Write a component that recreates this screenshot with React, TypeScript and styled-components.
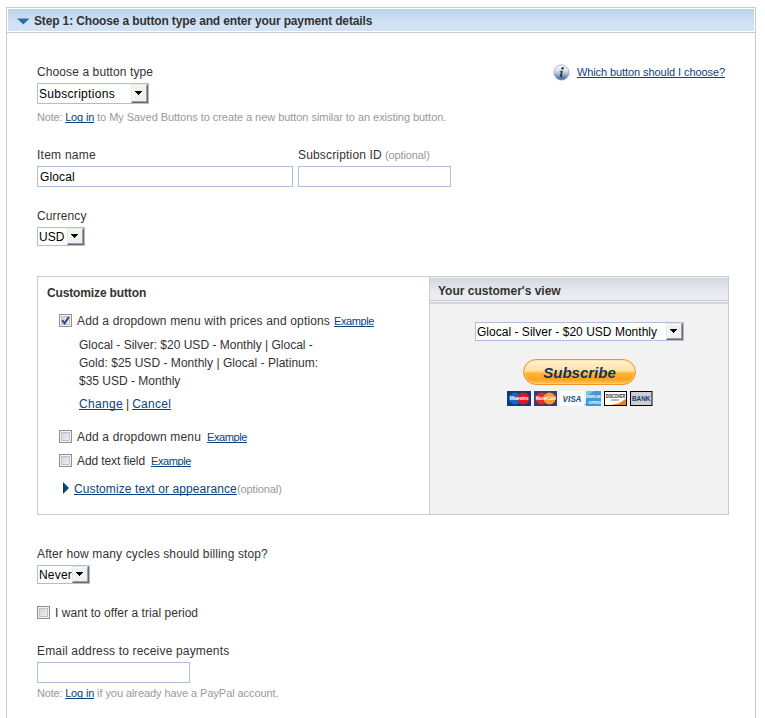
import React from "react";
import styled, { createGlobalStyle, css } from "styled-components";

const Global = createGlobalStyle`
  * { box-sizing: border-box; }
  html, body { margin: 0; padding: 0; background: #fff; }
  body { font: 12px/16px "Liberation Sans", Arial, sans-serif; color: #333; overflow: hidden; }
`;

const Page = styled.div`
  height: 718px;
  padding: 7px 9px 0 6px;
  overflow: hidden;
`;

const StepPanel = styled.section`
  width: 750px;
  height: 730px;
  border: 1px solid #ccc;
`;

const StepHeader = styled.header`
  height: 25px;
  padding: 1px;
  border-bottom: 1px solid #ccc;
`;

const StepBar = styled.div`
  display: flex;
  align-items: center;
  gap: 4px;
  height: 22px;
  padding: 2px 0 0 9px;
  background: linear-gradient(#b9d1ed, #cfe1f4 55%, #d1e3f5);
`;

const Text = styled.span<{ $ls?: number }>`
  white-space: pre;
  letter-spacing: ${(p) => p.$ls ?? 0}px;
`;

const Title = styled(Text)`
  font-weight: bold;
`;

const Small = styled(Text)`
  font-size: 11px;
  color: #999;
`;

const Link = styled.a<{ $ls?: number; $small?: boolean }>`
  color: #084482;
  white-space: pre;
  font-size: ${(p) => (p.$small ? 11 : 12)}px;
  letter-spacing: ${(p) => p.$ls ?? 0}px;
  text-decoration: underline;
  text-decoration-skip-ink: none;
  text-underline-offset: 1px;
  text-decoration-thickness: 1px;
`;

const Form = styled.div`
  display: flex;
  flex-direction: column;
  padding: 31px 26px 0 30px;
`;

const Line = styled.div<{ $top?: number; $gap?: number }>`
  display: flex;
  align-items: center;
  height: 16px;
  margin-top: ${(p) => p.$top ?? 0}px;
  gap: ${(p) => p.$gap ?? 0}px;
`;

const SplitLine = styled(Line)`
  justify-content: space-between;
  padding-right: 4px;
`;

const HelpLink = styled.div`
  display: flex;
  align-items: center;
  gap: 7px;
`;

const field = css`
  border: 1px solid #a9c1db;
  background: #fff;
  color: #000;
`;

const Input = styled.div<{ $w: number }>`
  ${field}
  display: flex;
  align-items: center;
  width: ${(p) => p.$w}px;
  height: 21px;
  padding-left: 2px;
`;

const SelectBox = styled.div<{ $w: number; $h?: number }>`
  ${field}
  display: flex;
  align-items: center;
  justify-content: space-between;
  width: ${(p) => p.$w}px;
  height: ${(p) => p.$h ?? 19}px;
  padding-left: 1px;
`;

const SelectArrow = styled.span`
  display: flex;
  align-items: center;
  justify-content: center;
  width: 17px;
  height: 100%;
  flex: none;
  padding: 0 2px 1px 0;
  background: #f0f0f0;
  border: 1px solid;
  border-color: #e3e3e3 #696969 #696969 #e3e3e3;
  box-shadow: inset -1px -1px #a0a0a0, inset 1px 1px #fff;
`;

const Fields = styled.div`
  display: flex;
  gap: 5px;
`;

const FieldColumn = styled.div<{ $top?: number }>`
  display: flex;
  flex-direction: column;
  gap: 3px;
  margin-top: ${(p) => p.$top ?? 21}px;
`;

const Check = styled.span`
  display: flex;
  align-items: center;
  justify-content: center;
  width: 13px;
  height: 13px;
  flex: none;
  margin-bottom: 1px;
  border: 1px solid #8e8f8f;
  box-shadow: inset 0 0 0 1px #f4f4f4, inset 0 0 0 2px #bcc1c7;
  background: linear-gradient(135deg, #c9ced5, #f6f6f6);
`;

const Customizer = styled.div`
  display: flex;
  width: 692px;
  height: 239px;
  margin-top: 30px;
  border: 1px solid #ccc;
`;

const Options = styled.div`
  display: flex;
  flex-direction: column;
  width: 391px;
  padding: 8px 0 0 9px;
`;

const OptionLine = styled(Line)`
  padding-left: 12px;
`;

const Summary = styled.div`
  display: flex;
  flex-direction: column;
  margin-top: 7px;
  padding-left: 32px;
  line-height: 18px;
`;

const Preview = styled.div`
  display: flex;
  flex-direction: column;
  align-items: center;
  width: 299px;
  flex: none;
  padding-left: 1px;
  border-left: 1px solid #ccc;
  background: #f2f2f2;
`;

const PreviewHeader = styled.div`
  display: flex;
  align-self: stretch;
  flex: none;
  height: 26px;
  padding: 5px 8px;
  margin: 1px 0 18px -1px;
  border-bottom: 2px solid #cfd6de;
  background: linear-gradient(#d2d8e0, #e9ebf0 60%, #ebedf2 22px, #c9ced5 22px, #c9ced5 23px, #eef0f3 23px);
`;

const SubscribeButton = styled.div`
  display: flex;
  align-items: center;
  justify-content: center;
  width: 113px;
  height: 26px;
  margin: 18px 0 6px;
  padding-top: 1px;
  border: 1px solid #f0942c;
  border-radius: 13px;
  background: linear-gradient(#fff3d6, #ffe0a0 46%, #ffb73c 54%, #ffa21c 80%, #ffc45c);
  box-shadow: inset 0 0 0 1px rgba(255, 214, 140, 0.6);
  color: #0b3263;
  font: italic bold 15px/24px "Liberation Sans", Arial, sans-serif;
`;

const Down = () => (
  <SelectArrow>
    <svg width="7" height="4" viewBox="0 0 7 4" shapeRendering="crispEdges"><path d="M0 0h7v1H6v1H5v1H4v1H3V3H2V2H1V1H0z" /></svg>
  </SelectArrow>
);

const Select = ({ w, h, ls, children }: { w: number; h?: number; ls?: number; children: string }) => (
  <SelectBox $w={w} $h={h}><Text $ls={ls}>{children}</Text><Down /></SelectBox>
);

const Checkbox = ({ checked }: { checked?: boolean }) => (
  <Check>
    {checked && <svg width="9" height="9" viewBox="0 0 9 9"><path d="M1.2 4.2 3.6 7.4 7.8 1" fill="none" stroke="#31478a" strokeWidth="2" /></svg>}
  </Check>
);

const Info = () => (
  <svg width="17" height="17" viewBox="0 0 17 17">
    <defs>
      <linearGradient id="info" x1="0" y1="0" x2="0" y2="1">
        <stop offset="0" stopColor="#fff" /><stop offset=".45" stopColor="#cfdbe8" /><stop offset="1" stopColor="#2c5f97" />
      </linearGradient>
    </defs>
    <circle cx="8.5" cy="8.5" r="7.6" fill="url(#info)" stroke="#8fa5be" strokeWidth=".8" />
    <circle cx="9.6" cy="4.2" r="1.2" fill="#333" />
    <path d="M6.8 6.8h3L8.7 12.2h1.1l-.3.8H6.8l1.1-5.4H6.6z" fill="#333" />
  </svg>
);

const Cards = () => (
  <svg width="146" height="15" viewBox="0 0 146 15" fontFamily="Liberation Sans, Arial, sans-serif" fontWeight="bold">
    <rect width="24" height="15" fill="#123a78" />
    <circle cx="8.2" cy="7.5" r="6" fill="#1768c4" /><circle cx="16.3" cy="7.5" r="6" fill="#dc1822" />
    <text x="2.5" y="9.3" fontSize="5.3" textLength="19" fill="#fff">Maestro</text>
    <rect x="27" width="23" height="15" fill="#383c70" />
    <circle cx="34.8" cy="7.5" r="6" fill="#e32b29" /><circle cx="42.5" cy="7.5" r="6" fill="#f59a34" />
    <text x="28.8" y="9.3" fontSize="4.8" textLength="20" lengthAdjust="spacingAndGlyphs" fill="#fff">MasterCard</text>
    <rect x="53" width="24" height="15" fill="#fff" />
    <text x="55.5" y="11" fontSize="9" fontStyle="italic" textLength="19" lengthAdjust="spacingAndGlyphs" fill="#174c91">VISA</text>
    <path d="M55.2 4.7h3l1 3z" fill="#f0a32b" />
    <path d="M77.6 13h1v1h-1z" fill="#2a8ccd" />
    <rect x="79" width="15" height="15" fill="#3d9bdc" />
    <path d="M79 0h8l-8 6z" fill="#7cc0ec" />
    <text x="79.3" y="7" fontSize="3.8" textLength="14.2" lengthAdjust="spacingAndGlyphs" fill="#fff">AMERICAN</text>
    <text x="81.8" y="12.5" fontSize="3.8" textLength="11.8" lengthAdjust="spacingAndGlyphs" fill="#fff">EXPRESS</text>
    <rect x="97.5" y=".5" width="22" height="14" fill="#fff" stroke="#000" />
    <path d="M119 7.5V14h-15c7-1 11-3 15-6.5z" fill="#ef7f24" />
    <text x="98.7" y="7" fontSize="5.5" textLength="19.6" lengthAdjust="spacingAndGlyphs" fill="#222">DISCOVER</text>
    <path d="M104 9h8" stroke="#555" strokeWidth=".8" />
    <rect x="123.5" y=".5" width="21.5" height="14" fill="#cbcfd5" stroke="#000" />
    <text x="125" y="10" fontSize="6.5" textLength="18.5" lengthAdjust="spacingAndGlyphs" fill="#163a70">BANK</text>
  </svg>
);

export default function App() {
  return (
    <Page>
      <Global />
      <StepPanel>
        <StepHeader>
          <StepBar>
            <svg width="13" height="7" viewBox="0 0 13 7"><path d="M0 .5h12.5L6.3 6.5z" fill="#2f6ca3" /></svg>
            <Title $ls={-0.145}>Step 1: Choose a button type and enter your payment details</Title>
          </StepBar>
        </StepHeader>
        <Form>
          <SplitLine>
            <Text $ls={0.1}>Choose a button type</Text>
            <HelpLink>
              <Info />
              <Link $small $ls={-0.08}>Which button should I choose?</Link>
            </HelpLink>
          </SplitLine>
          <FieldColumn $top={3}><Select w={112} h={21} ls={0.3}>Subscriptions</Select></FieldColumn>
          <Line $top={5}>
            <Small $ls={-0.2}>{"Note: "}</Small><Link $small $ls={-0.17}>Log in</Link>
            <Small $ls={-0.05}> to My Saved Buttons to create a new button similar to an existing button.</Small>
          </Line>
          <Fields>
            <FieldColumn $top={22}>
              <Line><Text $ls={0.25}>Item name</Text></Line>
              <Input $w={256}><Text $ls={0.15}>Glocal</Text></Input>
            </FieldColumn>
            <FieldColumn $top={22}>
              <Line $gap={3}><Text $ls={0.17}>Subscription ID</Text><Small $ls={-0.1}>(optional)</Small></Line>
              <Input $w={153} />
            </FieldColumn>
          </Fields>
          <FieldColumn>
            <Line><Text $ls={0.1}>Currency</Text></Line>
            <Select w={48} ls={0.1}>USD</Select>
          </FieldColumn>
          <Customizer>
            <Options>
              <Title $ls={-0.14}>Customize button</Title>
              <OptionLine $top={12} $gap={5}>
                <Checkbox checked />
                <Line $gap={4}>
                  <Text $ls={0.16}>Add a dropdown menu with prices and options</Text>
                  <Link $small $ls={-0.4}>Example</Link>
                </Line>
              </OptionLine>
              <Summary>
                <Text>Glocal - Silver: $20 USD - Monthly | Glocal -</Text>
                <Text $ls={0.03}>Gold: $25 USD - Monthly | Glocal - Platinum:</Text>
                <Text>$35 USD - Monthly</Text>
                <Line $top={6} $gap={3}>
                  <Link $ls={0.33}>Change</Link><Text>|</Text><Link $ls={0.27}>Cancel</Link>
                </Line>
              </Summary>
              <OptionLine $top={17} $gap={5}>
                <Checkbox />
                <Line $gap={6}><Text $ls={0.17}>Add a dropdown menu</Text><Link $small $ls={-0.4}>Example</Link></Line>
              </OptionLine>
              <OptionLine $top={8} $gap={5}>
                <Checkbox />
                <Line $gap={6}><Text $ls={-0.1}>Add text field</Text><Link $small $ls={-0.4}>Example</Link></Line>
              </OptionLine>
              <OptionLine $top={12}>
                <svg width="15" height="14" viewBox="0 0 15 14"><path d="M4 0v12l6-6z" fill="#084482" /></svg>
                <Link $ls={0.1}>Customize text or appearance</Link><Small $ls={-0.1}>(optional)</Small>
              </OptionLine>
            </Options>
            <Preview>
              <PreviewHeader><Title>Your customer's view</Title></PreviewHeader>
              <Select w={209} ls={0.02}>Glocal - Silver - $20 USD Monthly</Select>
              <SubscribeButton>Subscribe</SubscribeButton>
              <Cards />
            </Preview>
          </Customizer>
          <FieldColumn $top={31}>
            <Line><Text $ls={0.13}>After how many cycles should billing stop?</Text></Line>
            <Select w={53} ls={0.2}>Never</Select>
          </FieldColumn>
          <Line $top={21} $gap={5}>
            <Checkbox /><Text $ls={0.04}>I want to offer a trial period</Text>
          </Line>
          <FieldColumn $top={22}>
            <Line><Text $ls={0.17}>Email address to receive payments</Text></Line>
            <Input $w={153} />
          </FieldColumn>
          <Line $top={2}>
            <Small $ls={-0.2}>{"Note: "}</Small><Link $small $ls={-0.17}>Log in</Link>
            <Small $ls={-0.07}> if you already have a PayPal account.</Small>
          </Line>
        </Form>
      </StepPanel>
    </Page>
  );
}
